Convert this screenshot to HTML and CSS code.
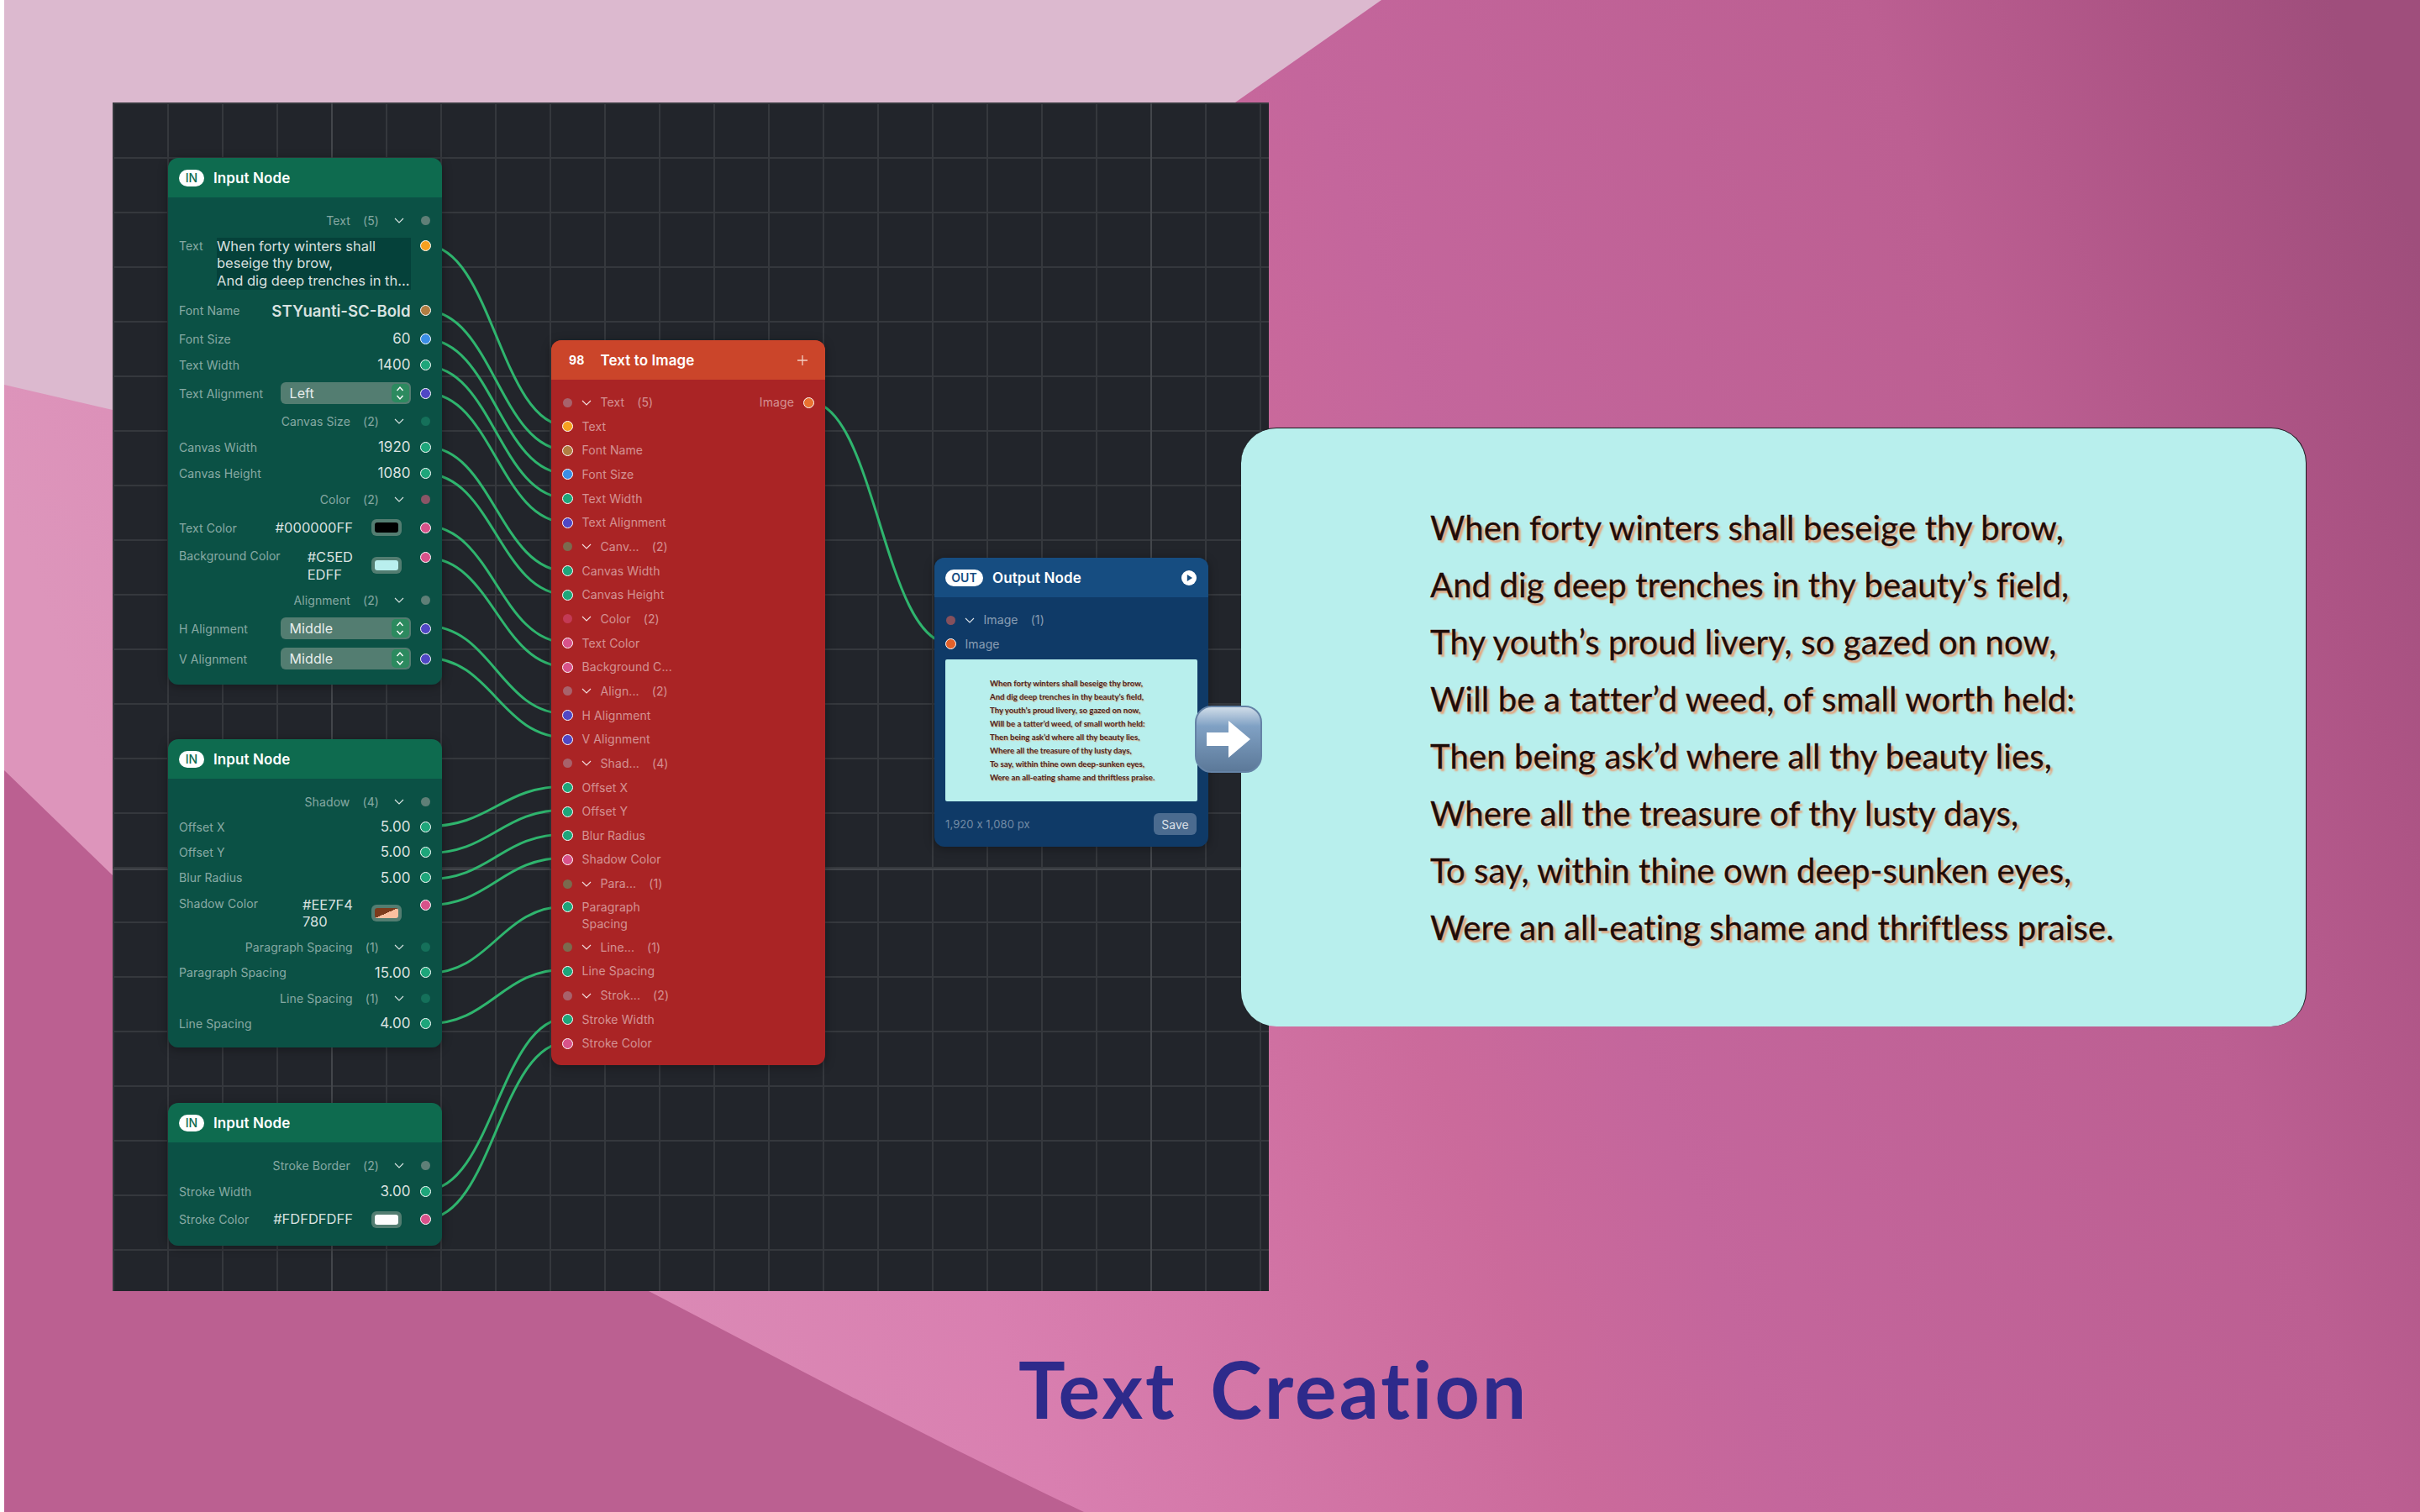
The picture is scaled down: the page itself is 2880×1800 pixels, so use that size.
FILE: index.html
```html
<!DOCTYPE html>
<html lang="en">
<head>
  <meta charset="UTF-8" />
  <meta name="viewport" content="width=device-width, initial-scale=1.0" />
  <title>Text Creation</title>
  <link rel="stylesheet" href="styles.css">
</head>
<body>
  <div class="stage">
    <svg class="backdrop" viewBox="0 0 2880 1800" aria-hidden="true">
      <path class="shape-pale" d="M5 0 H1644 L1470 122 C1100 380 500 530 134 488 L5 458 Z" />
      <path class="shape-dark" d="M5 917 L134 1042 C350 1250 550 1420 772 1537 C950 1630 1120 1720 1290 1800 H5 Z" />
    </svg>

    <div class="canvas">
      <svg class="wires" viewBox="134 122 1376 1415" aria-hidden="true">
        <path d="M506 292 C586 292 595 507 675 507" />
        <path d="M506 370 C586 370 595 536 675 536" />
        <path d="M506 404 C586 404 595 564 675 564" />
        <path d="M506 436 C586 436 595 593 675 593" />
        <path d="M506 468 C586 468 595 622 675 622" />
        <path d="M506 532 C586 532 595 680 675 680" />
        <path d="M506 564 C586 564 595 708 675 708" />
        <path d="M506 626 C586 626 595 765 675 765" />
        <path d="M506 664 C586 664 595 794 675 794" />
        <path d="M506 745 C586 745 595 850 675 850" />
        <path d="M506 783 C586 783 595 878 675 878" />
        <path d="M506 984 C586 984 595 936 675 936" />
        <path d="M506 1016 C586 1016 595 964 675 964" />
        <path d="M506 1047 C586 1047 595 993 675 993" />
        <path d="M506 1078 C586 1078 595 1021 675 1021" />
        <path d="M506 1159 C586 1159 595 1079 675 1079" />
        <path d="M506 1219 C586 1219 595 1154 675 1154" />
        <path d="M506 1417 C586 1417 595 1212 675 1212" />
        <path d="M506 1451 C586 1451 595 1241 675 1241" />
        <path d="M962 478 C1042 478 1051 766 1131 766" />
      </svg>

      <!-- text settings -->
      <div class="node node-input node-a">
        <div class="node-head"><span class="pill">IN</span><span class="node-title">Input Node</span></div>
        <div class="node-body">
          <div class="sec"><span>Text</span><span class="count">(5)</span><svg class="chev" viewBox="0 0 12 7"><path d="M1 1 L6 6 L11 1" /></svg><i class="dot dot-grey"></i></div>
          <div class="row row-text">
            <span class="label label-short">Text</span>
            <div class="textbox">When forty winters shall<br>beseige thy brow,<br>And dig deep trenches in th...</div>
            <i class="port p-orange"></i>
          </div>
          <div class="row row-font"><span class="label">Font Name</span><span class="value value-font">STYuanti-SC-Bold</span><i class="port p-brown"></i></div>
          <div class="row"><span class="label">Font Size</span><span class="value">60</span><i class="port p-blue"></i></div>
          <div class="row"><span class="label">Text Width</span><span class="value">1400</span><i class="port p-green"></i></div>
          <div class="row"><span class="label">Text Alignment</span><div class="select"><span>Left</span><span class="stepper"><svg viewBox="0 0 10 18"><path d="M1.5 6 L5 2 L8.5 6 M1.5 12 L5 16 L8.5 12" /></svg></span></div><i class="port p-indigo"></i></div>
          <div class="sec"><span>Canvas Size</span><span class="count">(2)</span><svg class="chev" viewBox="0 0 12 7"><path d="M1 1 L6 6 L11 1" /></svg><i class="dot dot-teal"></i></div>
          <div class="row"><span class="label">Canvas Width</span><span class="value">1920</span><i class="port p-green"></i></div>
          <div class="row"><span class="label">Canvas Height</span><span class="value">1080</span><i class="port p-green"></i></div>
          <div class="sec"><span>Color</span><span class="count">(2)</span><svg class="chev" viewBox="0 0 12 7"><path d="M1 1 L6 6 L11 1" /></svg><i class="dot dot-plum"></i></div>
          <div class="row row-color"><span class="label">Text Color</span><span class="value">#000000FF</span><span class="swatch"><b class="fill-black"></b></span><i class="port p-pink"></i></div>
          <div class="row row-tall"><span class="label">Background Color</span><span class="value value-wrap">#C5ED<br>EDFF</span><span class="swatch"><b class="fill-aqua"></b></span><i class="port p-pink"></i></div>
          <div class="sec"><span>Alignment</span><span class="count">(2)</span><svg class="chev" viewBox="0 0 12 7"><path d="M1 1 L6 6 L11 1" /></svg><i class="dot dot-grey"></i></div>
          <div class="row"><span class="label">H Alignment</span><div class="select"><span>Middle</span><span class="stepper"><svg viewBox="0 0 10 18"><path d="M1.5 6 L5 2 L8.5 6 M1.5 12 L5 16 L8.5 12" /></svg></span></div><i class="port p-indigo"></i></div>
          <div class="row"><span class="label">V Alignment</span><div class="select"><span>Middle</span><span class="stepper"><svg viewBox="0 0 10 18"><path d="M1.5 6 L5 2 L8.5 6 M1.5 12 L5 16 L8.5 12" /></svg></span></div><i class="port p-indigo"></i></div>
        </div>
      </div>

      <!-- shadow and spacing -->
      <div class="node node-input node-b">
        <div class="node-head"><span class="pill">IN</span><span class="node-title">Input Node</span></div>
        <div class="node-body tight">
          <div class="sec"><span>Shadow</span><span class="count">(4)</span><svg class="chev" viewBox="0 0 12 7"><path d="M1 1 L6 6 L11 1" /></svg><i class="dot dot-grey"></i></div>
          <div class="row"><span class="label">Offset X</span><span class="value">5.00</span><i class="port p-green"></i></div>
          <div class="row"><span class="label">Offset Y</span><span class="value">5.00</span><i class="port p-green"></i></div>
          <div class="row"><span class="label">Blur Radius</span><span class="value">5.00</span><i class="port p-green"></i></div>
          <div class="row row-tall"><span class="label">Shadow Color</span><span class="value value-wrap">#EE7F4<br>780</span><span class="swatch"><b class="fill-shadow"></b></span><i class="port p-pink"></i></div>
          <div class="sec"><span>Paragraph Spacing</span><span class="count">(1)</span><svg class="chev" viewBox="0 0 12 7"><path d="M1 1 L6 6 L11 1" /></svg><i class="dot dot-teal"></i></div>
          <div class="row"><span class="label">Paragraph Spacing</span><span class="value">15.00</span><i class="port p-green"></i></div>
          <div class="sec"><span>Line Spacing</span><span class="count">(1)</span><svg class="chev" viewBox="0 0 12 7"><path d="M1 1 L6 6 L11 1" /></svg><i class="dot dot-teal"></i></div>
          <div class="row"><span class="label">Line Spacing</span><span class="value">4.00</span><i class="port p-green"></i></div>
        </div>
      </div>

      <!-- stroke -->
      <div class="node node-input node-c">
        <div class="node-head"><span class="pill">IN</span><span class="node-title">Input Node</span></div>
        <div class="node-body">
          <div class="sec"><span>Stroke Border</span><span class="count">(2)</span><svg class="chev" viewBox="0 0 12 7"><path d="M1 1 L6 6 L11 1" /></svg><i class="dot dot-grey"></i></div>
          <div class="row"><span class="label">Stroke Width</span><span class="value">3.00</span><i class="port p-green"></i></div>
          <div class="row row-color"><span class="label">Stroke Color</span><span class="value">#FDFDFDFF</span><span class="swatch"><b class="fill-white"></b></span><i class="port p-pink"></i></div>
        </div>
      </div>

      <div class="node node-red">
        <div class="node-head"><span class="num">98</span><span class="node-title">Text to Image</span><svg class="plus" viewBox="0 0 14 14"><path d="M7 1 V13 M1 7 H13" /></svg></div>
        <div class="list">
          <div class="item"><i class="dot dot-rose"></i><svg class="chev" viewBox="0 0 12 7"><path d="M1 1 L6 6 L11 1" /></svg><span>Text</span><span class="count">(5)</span><span class="out-label">Image</span><i class="port p-orange2"></i></div>
          <div class="item"><i class="port p-orange"></i><span>Text</span></div>
          <div class="item"><i class="port p-brown"></i><span>Font Name</span></div>
          <div class="item"><i class="port p-blue"></i><span>Font Size</span></div>
          <div class="item"><i class="port p-green"></i><span>Text Width</span></div>
          <div class="item"><i class="port p-indigo"></i><span>Text Alignment</span></div>
          <div class="item"><i class="dot dot-olive"></i><svg class="chev" viewBox="0 0 12 7"><path d="M1 1 L6 6 L11 1" /></svg><span>Canv...</span><span class="count">(2)</span></div>
          <div class="item"><i class="port p-green"></i><span>Canvas Width</span></div>
          <div class="item"><i class="port p-green"></i><span>Canvas Height</span></div>
          <div class="item"><i class="dot dot-crimson"></i><svg class="chev" viewBox="0 0 12 7"><path d="M1 1 L6 6 L11 1" /></svg><span>Color</span><span class="count">(2)</span></div>
          <div class="item"><i class="port p-pink"></i><span>Text Color</span></div>
          <div class="item"><i class="port p-pink"></i><span>Background C...</span></div>
          <div class="item"><i class="dot dot-rose"></i><svg class="chev" viewBox="0 0 12 7"><path d="M1 1 L6 6 L11 1" /></svg><span>Align...</span><span class="count">(2)</span></div>
          <div class="item"><i class="port p-indigo"></i><span>H Alignment</span></div>
          <div class="item"><i class="port p-indigo"></i><span>V Alignment</span></div>
          <div class="item"><i class="dot dot-rose"></i><svg class="chev" viewBox="0 0 12 7"><path d="M1 1 L6 6 L11 1" /></svg><span>Shad...</span><span class="count">(4)</span></div>
          <div class="item"><i class="port p-green"></i><span>Offset X</span></div>
          <div class="item"><i class="port p-green"></i><span>Offset Y</span></div>
          <div class="item"><i class="port p-green"></i><span>Blur Radius</span></div>
          <div class="item"><i class="port p-pink"></i><span>Shadow Color</span></div>
          <div class="item"><i class="dot dot-olive"></i><svg class="chev" viewBox="0 0 12 7"><path d="M1 1 L6 6 L11 1" /></svg><span>Para...</span><span class="count">(1)</span></div>
          <div class="item item-tall"><i class="port p-green"></i><span>Paragraph<br>Spacing</span></div>
          <div class="item"><i class="dot dot-olive"></i><svg class="chev" viewBox="0 0 12 7"><path d="M1 1 L6 6 L11 1" /></svg><span>Line...</span><span class="count">(1)</span></div>
          <div class="item"><i class="port p-green"></i><span>Line Spacing</span></div>
          <div class="item"><i class="dot dot-rose"></i><svg class="chev" viewBox="0 0 12 7"><path d="M1 1 L6 6 L11 1" /></svg><span>Strok...</span><span class="count">(2)</span></div>
          <div class="item"><i class="port p-green"></i><span>Stroke Width</span></div>
          <div class="item"><i class="port p-pink"></i><span>Stroke Color</span></div>
        </div>
      </div>

      <div class="node node-blue">
        <div class="node-head"><span class="pill pill-out">OUT</span><span class="node-title">Output Node</span><svg class="play" viewBox="0 0 18 18"><circle cx="9" cy="9" r="9" /><path d="M6.8 5 L13 9 L6.8 13 Z" /></svg></div>
        <div class="list">
          <div class="item"><i class="dot dot-mauve"></i><svg class="chev" viewBox="0 0 12 7"><path d="M1 1 L6 6 L11 1" /></svg><span>Image</span><span class="count">(1)</span></div>
          <div class="item"><i class="port p-red"></i><span>Image</span></div>
        </div>
        <div class="preview">
          <p>When forty winters shall beseige thy brow,</p>
          <p>And dig deep trenches in thy beauty’s field,</p>
          <p>Thy youth’s proud livery, so gazed on now,</p>
          <p>Will be a tatter’d weed, of small worth held:</p>
          <p>Then being ask’d where all thy beauty lies,</p>
          <p>Where all the treasure of thy lusty days,</p>
          <p>To say, within thine own deep-sunken eyes,</p>
          <p>Were an all-eating shame and thriftless praise.</p>
        </div>
        <div class="node-foot"><span>1,920 x 1,080 px</span><button class="save">Save</button></div>
      </div>
    </div>

    <div class="card">
      <p>When forty winters shall beseige thy brow,</p>
      <p>And dig deep trenches in thy beauty’s field,</p>
      <p>Thy youth’s proud livery, so gazed on now,</p>
      <p>Will be a tatter’d weed, of small worth held:</p>
      <p>Then being ask’d where all thy beauty lies,</p>
      <p>Where all the treasure of thy lusty days,</p>
      <p>To say, within thine own deep-sunken eyes,</p>
      <p>Were an all-eating shame and thriftless praise.</p>
    </div>

    <svg class="arrow" viewBox="0 0 80 80" aria-hidden="true">
      <defs>
        <linearGradient id="arrowFill" x1="0" y1="0" x2="0" y2="1">
          <stop offset="0" stop-color="#d3dfea" />
          <stop offset="0.3" stop-color="#80a1c4" />
          <stop offset="1" stop-color="#5b7898" />
        </linearGradient>
      </defs>
      <rect x="1" y="1" width="78" height="78" rx="19" fill="url(#arrowFill)" stroke="#6583a6" stroke-width="2" />
      <path d="M14 32 H40 V18 L66 40 L40 62 V48 H14 Z" fill="#fff" />
    </svg>

    <h1 class="headline">Text Creation</h1>
  </div>
</body>
</html>
```

FILE: styles.css
```css
* {
  box-sizing: border-box;
}

body {
  margin: 0;
  background-color: #fff;
  font-family: Inter, "Liberation Sans", sans-serif;
}

.stage {
  position: relative;
  width: 2880px;
  height: 1800px;
  overflow: hidden;
  background: linear-gradient(71deg, #dd95bb 0%, #dd95bb 12%, #d97fb0 36%, #cb6a9b 54%, #c4669c 61%, #bc5f92 81%, #ad5485 90%, #9f4e7c 97%);
  border-left: 5px solid #fff;
}

.backdrop {
  position: absolute;
  left: -5px;
  top: 0;
  width: 2880px;
  height: 1800px;
}

.shape-pale {
  fill: #dcb9cf;
}

.shape-dark {
  fill: #bb6091;
}

/* graph canvas */
.canvas {
  position: absolute;
  left: 129px;
  top: 122px;
  width: 1376px;
  height: 1415px;
  background-color: #22252b;
  background-image:
    linear-gradient(#43464b 2px, transparent 2px),
    linear-gradient(90deg, #43464b 2px, transparent 2px),
    linear-gradient(#35383d 2px, transparent 2px),
    linear-gradient(90deg, #35383d 2px, transparent 2px);
  background-size: 100% 975px, 975px 100%, 65px 65px, 65px 65px;
  background-position: 0 912px, 260px 0, 0 0, 0 0;
}

.wires {
  position: absolute;
  left: 0;
  top: 0;
  width: 1376px;
  height: 1415px;
}

.wires path {
  fill: none;
  stroke: #2fb56e;
  stroke-width: 3;
}

.node {
  position: absolute;
  width: 326px;
  border-radius: 12px;
  overflow: hidden;
  box-shadow: 0 2px 12px rgba(0, 0, 0, 0.35);
  font-size: 14px;
  letter-spacing: 0.1px;
  color: rgba(255, 255, 255, 0.52);
}

.node-a {
  left: 66px;
  top: 66px;
}

.node-b {
  left: 66px;
  top: 758px;
}

.node-c {
  left: 66px;
  top: 1191px;
}

.node-red {
  left: 522px;
  top: 283px;
  background-color: #aa2425;
}

.node-blue {
  left: 978px;
  top: 542px;
  background-color: #0f3a67;
}

.node-head {
  display: flex;
  align-items: center;
  height: 47px;
  padding: 0 13px;
  gap: 11px;
  color: #fff;
}

.node-input .node-head {
  background-color: #0e6b4f;
}

.node-red .node-head {
  background-color: #cb452a;
  padding-left: 21px;
  gap: 19px;
}

.node-blue .node-head {
  background-color: #164d81;
}

.node-title {
  font-size: 17px;
  font-weight: 600;
}

.pill {
  display: flex;
  align-items: center;
  justify-content: center;
  width: 30px;
  height: 20px;
  border-radius: 10px;
  background-color: #fff;
  color: #0e6b4f;
  font-size: 14px;
  font-weight: 500;
}

.pill-out {
  width: 45px;
  color: #164d81;
  font-size: 14px;
  font-weight: 600;
}

.num {
  font-size: 14px;
  font-weight: 700;
}

.plus {
  width: 14px;
  height: 14px;
  margin-left: auto;
  margin-right: 7px;
}

.plus path {
  stroke: #f3cfc4;
  stroke-width: 1.3;
  fill: none;
}

.play {
  width: 18px;
  height: 18px;
  margin-left: auto;
  margin-right: 1px;
}

.play circle {
  fill: #fff;
}

.play path {
  fill: #164d81;
}

/* input node rows */
.node-body {
  display: flex;
  flex-direction: column;
  gap: 10px;
  padding: 16.5px 13.5px 18px 13px;
  background-color: #0b5145;
}

.node-body.tight {
  gap: 9.3px;
}

.row,
.sec {
  display: flex;
  align-items: center;
  min-height: 21px;
}

.sec {
  justify-content: flex-end;
  color: rgba(255, 255, 255, 0.5);
}

.sec .count {
  margin-left: 15px;
}

.sec .chev {
  margin-left: 18px;
}

.sec .dot {
  margin: 0 1px 0 19.5px;
}

.label {
  flex: 1;
  white-space: nowrap;
}

.label-short {
  flex: none;
  width: 45px;
  align-self: flex-start;
  line-height: 20px;
}

.value {
  font-size: 17px;
  letter-spacing: 0;
  color: rgba(255, 255, 255, 0.85);
  line-height: 20.5px;
  margin-right: 11px;
}

.row-color .value,
.row-tall .value {
  font-size: 16.5px;
}

.value-wrap {
  text-align: left;
}

.value-font {
  font-size: 18.6px;
  font-weight: 600;
}

.row-text {
  align-items: flex-start;
  margin-bottom: 2px;
}

.row-text .port {
  margin-top: 3px;
  margin-left: auto;
}

.row-font {
  min-height: 26.5px;
}

.row-color {
  min-height: 26px;
}

.textbox {
  width: 231px;
  height: 62px;
  background-color: #05413a;
  color: rgba(255, 255, 255, 0.85);
  font-size: 16.5px;
  letter-spacing: 0;
  line-height: 20.5px;
  white-space: nowrap;
  overflow: hidden;
}

.row-tall {
  align-items: flex-start;
  min-height: 41px;
  margin-top: 2px;
}

.row-tall .swatch {
  margin-top: 10px;
}

.row-tall .port {
  margin-top: 4px;
}

.select {
  display: flex;
  align-items: center;
  justify-content: space-between;
  width: 155px;
  height: 26px;
  padding: 0 2px 0 11px;
  margin-right: 11px;
  border-radius: 6px;
  background-color: #537d71;
  color: rgba(255, 255, 255, 0.88);
  font-size: 16px;
}

.stepper {
  display: flex;
  align-items: center;
  justify-content: center;
  width: 21px;
  height: 22px;
  border-radius: 5px;
  background-color: #2c8a5f;
}

.stepper svg {
  width: 10px;
  height: 18px;
}

.stepper path {
  fill: none;
  stroke: #fff;
  stroke-width: 1.4;
}

.swatch {
  display: block;
  width: 36px;
  height: 20px;
  padding: 4px;
  margin: 0 21.5px 0 11px;
  border-radius: 6px;
  background-color: #537d71;
}

.swatch b {
  display: block;
  height: 100%;
  border-radius: 3px;
}

.fill-black {
  background-color: #000;
}

.fill-aqua {
  background-color: #b9efee;
}

.fill-white {
  background-color: #fdfdfd;
}

.fill-shadow {
  background: linear-gradient(to bottom right, #7d3b1c 50%, #fbbf9f 50%);
}

/* ports and dots */
.port {
  flex: none;
  display: block;
  width: 13px;
  height: 13px;
  border-radius: 50%;
  border: 1.5px solid #fff;
}

.p-orange { background-color: #f5a020; }
.p-brown { background-color: #b07d42; }
.p-blue { background-color: #3b8ee6; }
.p-green { background-color: #1ea57a; }
.p-indigo { background-color: #5047c4; }
.p-pink { background-color: #d8528a; }
.p-orange2 { background-color: #e8702f; }
.p-red { background-color: #e2612a; }

.dot {
  flex: none;
  display: block;
  width: 11px;
  height: 11px;
  border-radius: 50%;
}

.dot-grey { background-color: #5f7f77; }
.dot-teal { background-color: #15705a; }
.dot-plum { background-color: #8a5566; }
.dot-rose { background-color: #a8626b; }
.dot-olive { background-color: #7b6a4e; }
.dot-crimson { background-color: #c33a55; }
.dot-mauve { background-color: #85505c; }

.chev {
  flex: none;
  width: 12px;
  height: 7px;
}

.chev path {
  fill: none;
  stroke: rgba(255, 255, 255, 0.85);
  stroke-width: 1.1;
}

/* list rows on the red and blue nodes */
.list {
  display: flex;
  flex-direction: column;
  padding: 12.7px 13px 11px 12.5px;
}

.node-blue .list {
  padding-bottom: 4px;
}

.item {
  display: flex;
  align-items: center;
  min-height: 28.67px;
  line-height: 20px;
  white-space: nowrap;
  color: rgba(255, 255, 255, 0.5);
}

.item > .port + span {
  margin-left: 11px;
}

.item > .dot {
  margin-left: 1px;
}

.item > .chev {
  margin: 0 11px;
}

.item .count {
  margin-left: 15px;
}

.item-tall {
  align-items: flex-start;
  min-height: 47px;
  padding-top: 4px;
}

.item-tall .port {
  margin-top: 3px;
}

.out-label {
  margin-left: auto;
  margin-right: 11px;
}

/* output node */
.preview {
  height: 169px;
  margin: 0 13px;
  padding-left: 53px;
  border-radius: 2px;
  background-color: #b8efed;
  display: flex;
  flex-direction: column;
  justify-content: center;
  color: #4a2522;
  font-family: Lato, sans-serif;
  font-size: 9.6px;
  font-weight: 700;
  letter-spacing: 0;
  line-height: 16px;
  text-shadow: 1px 1px 1px rgba(238, 127, 71, 0.6);
}

.preview p {
  margin: 0;
  white-space: nowrap;
}

.node-foot {
  display: flex;
  align-items: center;
  justify-content: space-between;
  height: 54px;
  padding: 0 14px 0 13px;
  font-size: 13px;
  color: rgba(255, 255, 255, 0.42);
}

.save {
  width: 51px;
  height: 26px;
  border: none;
  border-radius: 6px;
  background-color: #4b6b8f;
  color: rgba(255, 255, 255, 0.8);
  font-family: inherit;
  font-size: 14px;
}

/* result card */
.card {
  position: absolute;
  left: 1472px;
  top: 509px;
  width: 1268px;
  height: 713px;
  display: flex;
  flex-direction: column;
  justify-content: center;
  padding-left: 225px;
  border: solid #1b1b20;
  border-width: 1px 1px 0 0;
  border-radius: 42px;
  background-color: #b8efed;
  color: #1f0c08;
  font-family: Lato, sans-serif;
  font-size: 40px;
  letter-spacing: 0.15px;
  line-height: 68px;
  -webkit-text-stroke: 0.3px #1f0c08;
  text-shadow: 3px 3px 2px rgba(235, 150, 105, 0.85), 0 0 2px #fff;
}

.card p {
  margin: 0;
  white-space: nowrap;
}

.arrow {
  position: absolute;
  left: 1417px;
  top: 840px;
  width: 80px;
  height: 80px;
}

.headline {
  position: absolute;
  left: 1207px;
  top: 1588px;
  margin: 0;
  color: #2e2a8b;
  font-family: Lato, sans-serif;
  font-size: 93px;
  font-weight: 700;
  letter-spacing: 3px;
  word-spacing: 14px;
  line-height: 130px;
  white-space: nowrap;
}
```
